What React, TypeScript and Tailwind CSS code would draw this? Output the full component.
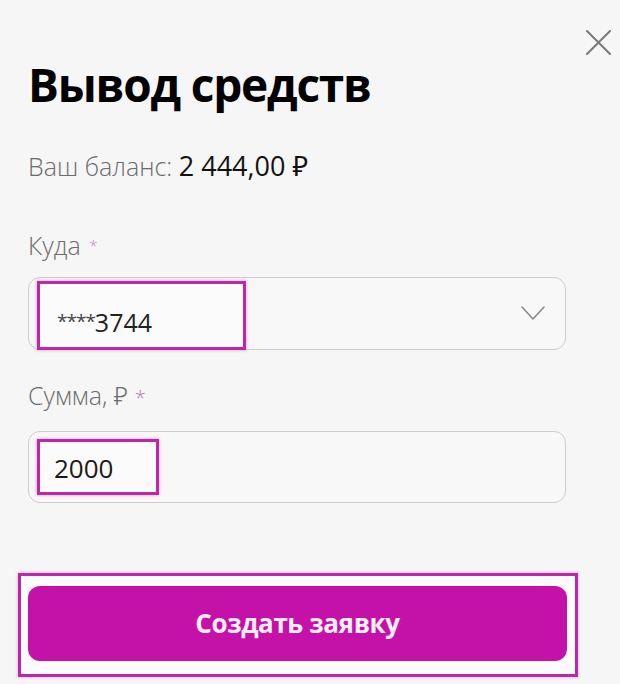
import React from "react";

export default function App() {
  return (
    <div
      className="relative w-[620px] h-[684px] bg-[#f6f6f6] overflow-hidden"
      style={{ fontFamily: '"Open Sans", "Noto Sans", sans-serif' }}
    >
      <button className="absolute top-[30px] left-[586px] w-[25px] h-[25px]" aria-label="close">
        <svg viewBox="0 0 25 25" width="25" height="25" fill="none" stroke="#7a7a7a" strokeWidth="2" strokeLinecap="round">
          <path d="M1 1 L24 24 M24 1 L1 24" />
        </svg>
      </button>

      <div className="flex flex-col pl-[28px] pr-[54px]">
        <h1 className="pt-[61px] text-[46px] leading-[46px] font-bold text-black tracking-[-1.2px]">
          Вывод средств
        </h1>

        <div className="mt-[44px] text-[25px] leading-[30px] text-[#111]">
          <span className="font-light text-[#6b6b6b]">Ваш баланс: </span>
          <span className="text-[27px]">2 444,00 ₽</span>
        </div>

        <div className="mt-[49px] text-[25px] leading-[30px] font-light text-[#6b6b6b]">
          Куда <span className="align-top text-[15px] text-[#c77bbb] ml-[2px]">*</span>
        </div>

        <div className="relative mt-[17px] h-[73px] rounded-[12px] border border-[#cdcdcd] bg-[#f8f8f8] flex items-center pt-[16px] pl-[28px] pr-[20px]">
          <div className="absolute left-[8px] top-[3px] w-[209px] h-[69px] border-[3px] border-[#bb29a8] bg-[#fbfbfb] shadow-[0_0_3px_rgba(220,60,200,0.6)]" />
          <span className="relative text-[25px] leading-[30px] text-[#222]">
            <span className="text-[19px] text-[#444] tracking-[-1px] align-[4px]">****</span>3744
          </span>
          <svg className="ml-auto -mt-[16px]" width="24" height="15" viewBox="0 0 24 15" fill="none" stroke="#8a8a8a" strokeWidth="1.6" strokeLinecap="round" strokeLinejoin="round">
            <path d="M1 1 L12 13 L23 1" />
          </svg>
        </div>

        <div className="mt-[30px] text-[25px] leading-[30px] font-light text-[#6b6b6b]">
          Сумма, ₽ <span className="text-[20px] text-[#b07aa8]">*</span>
        </div>

        <div className="relative mt-[18px] h-[72px] rounded-[12px] border border-[#cdcdcd] bg-[#f8f8f8] flex items-center pt-[2px] pl-[25px]">
          <div className="absolute left-[8px] top-[7px] w-[122px] h-[56px] border-[3px] border-[#bb29a8] bg-[#fbfbfb] shadow-[0_0_3px_rgba(220,60,200,0.6)]" />
          <span className="relative text-[26px] leading-[30px] text-[#1a1a1a]">2000</span>
        </div>
      </div>

      <div className="ml-[18px] mt-[70px] w-[560px] h-[104px] border-[3px] border-[#b82aa6] bg-[#fdfbfd] pt-[10px] pl-[7px] pr-[8px] shadow-[0_0_3px_rgba(230,80,210,0.6)]">
        <button className="w-full h-[75px] rounded-[12px] bg-[#c412a8] text-[26px] font-bold text-[#fdeefa] tracking-[-0.4px]">
          Создать заявку
        </button>
      </div>
    </div>
  );
}
